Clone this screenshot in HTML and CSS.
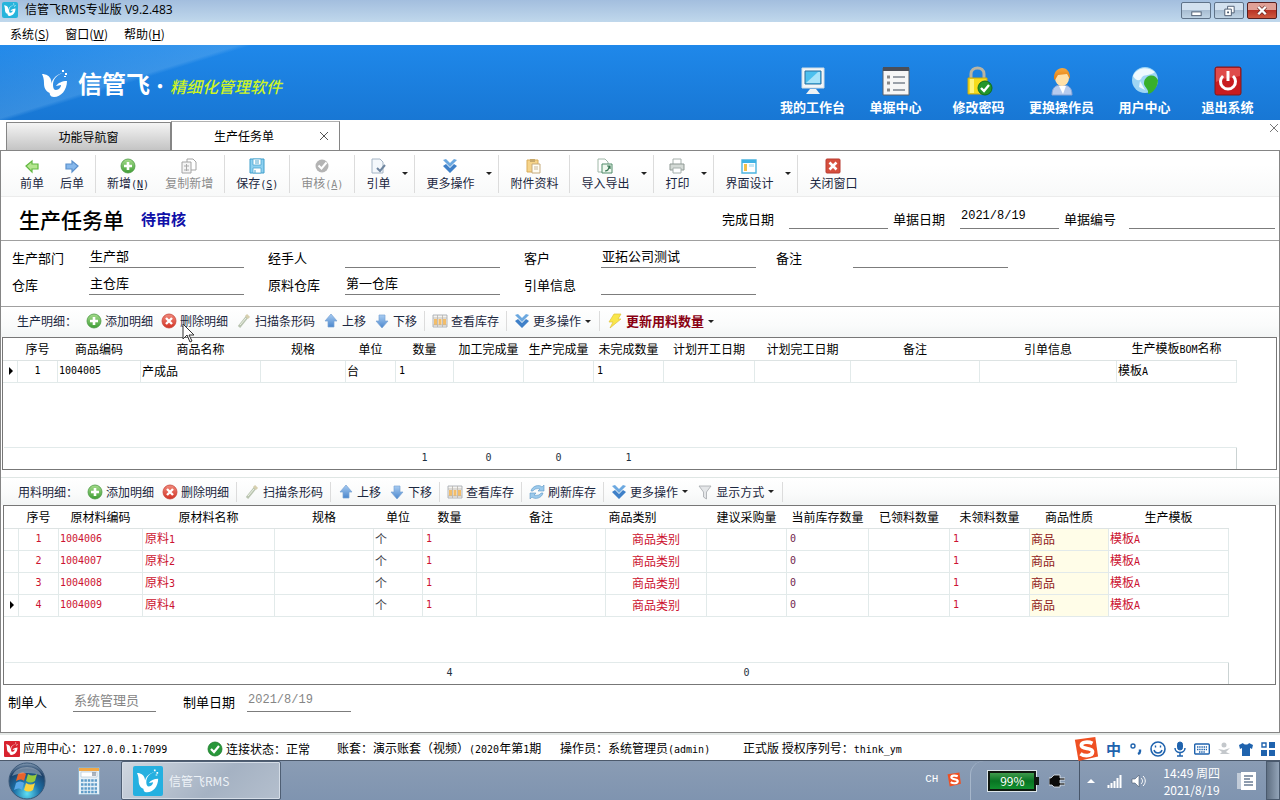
FILE: index.html
```html
<!DOCTYPE html>
<html lang="zh-CN">
<head>
<meta charset="utf-8">
<title>信管飞RMS专业版 V9.2.483</title>
<link rel="stylesheet" href="styles.css">
</head>
<body>
<svg class="sprite" aria-hidden="true">
  <defs>
    <linearGradient id="gGreen" x1="0" y1="0" x2="0" y2="1"><stop offset="0" stop-color="#a6dc8c"/><stop offset="1" stop-color="#3f9e35"/></linearGradient>
    <linearGradient id="gRed" x1="0" y1="0" x2="0" y2="1"><stop offset="0" stop-color="#f08a7c"/><stop offset="1" stop-color="#d33325"/></linearGradient>
    <linearGradient id="gBlue" x1="0" y1="0" x2="0" y2="1"><stop offset="0" stop-color="#a8ccf2"/><stop offset="1" stop-color="#4a86cc"/></linearGradient>
    <linearGradient id="gOrange" x1="0" y1="0" x2="0" y2="1"><stop offset="0" stop-color="#f7a83c"/><stop offset="1" stop-color="#e07a10"/></linearGradient>
    <radialGradient id="gOrb" cx=".5" cy=".85" r=".9"><stop offset="0" stop-color="#5fe0f4"/><stop offset=".4" stop-color="#1b6fa6"/><stop offset=".75" stop-color="#1d3f66"/><stop offset="1" stop-color="#a9bccf"/></radialGradient>
  </defs>
  <symbol id="bird" viewBox="0 0 26 28"><path d="M0 5c4 0 8 2 9 6l1 5-2 8C3 22 2 18 2 14 2 10 1 7 0 5z"/><path d="M22 4c-7 1-11 6-11 12 0 3 1 5 3 5 3 0 5-3 5-5l-5 1c2-3 6-5 11-5 0 9-6 16-13 16-4 0-5-3-4-7C9 11 13 5 22 4z"/><path d="M20 1h2v2h-2zM23 4h2v2h-2zM22 7h2v1h-2z"/></symbol>
  <symbol id="left" viewBox="0 0 16 16"><path d="M2 8l6-5v3h6v5H8v3z" fill="#b5e690" stroke="#62b840" stroke-width="1.200"/></symbol>
  <symbol id="right" viewBox="0 0 16 16"><path d="M14 8L8 3v3H2v5h6v3z" fill="#86b8ec" stroke="#5b90cc" stroke-width="1.200"/></symbol>
  <symbol id="up" viewBox="0 0 16 16"><path d="M8 1l6 7h-3v6H5V8H2z" fill="url(#gBlue)" stroke="#7aa4d4" stroke-width=".7"/></symbol>
  <symbol id="down" viewBox="0 0 16 16"><path d="M8 15l6-7h-3V2H5v6H2z" fill="url(#gBlue)" stroke="#7aa4d4" stroke-width=".7"/></symbol>
  <symbol id="plus" viewBox="0 0 16 16"><circle cx="8" cy="8" r="7" fill="url(#gGreen)" stroke="#4c9a45" stroke-width=".8"/><path d="M8 4v8M4 8h8" stroke="#fff" stroke-width="2.6"/></symbol>
  <symbol id="cross" viewBox="0 0 16 16"><circle cx="8" cy="8" r="7" fill="url(#gRed)" stroke="#c8453a" stroke-width=".8"/><path d="M5 5l6 6M11 5l-6 6" stroke="#fff" stroke-width="2.4"/></symbol>
  <symbol id="copy" viewBox="0 0 16 16"><path d="M6 1h6l3 3v8H6z" fill="#fff" stroke="#a4a4a4"/><path d="M1 4h9v11H1z" fill="#f4f4f4" stroke="#a4a4a4"/><path d="M3 8h5M3 12h5M5.500 6v7" stroke="#aaa"/></symbol>
  <symbol id="save" viewBox="0 0 16 16"><path d="M1 1h14v14H1z" fill="#8dd0f0" stroke="#3f9ecb"/><path d="M4 1h8v6H4zM4 10h8v5H4z" fill="#fff" stroke="#4fa6cf" stroke-width=".8"/><path d="M6 3h4M6 5h4M6 12v3" stroke="#4fa6cf"/></symbol>
  <symbol id="check" viewBox="0 0 16 16"><circle cx="8" cy="8" r="6.5" fill="#b4b4b4"/><path d="M4.500 7.500l3 3 5-6" fill="none" stroke="#fff" stroke-width="2"/></symbol>
  <symbol id="okay" viewBox="0 0 16 16"><circle cx="8" cy="8" r="7" fill="#28983a" stroke="#1a7a2a" stroke-width=".8"/><path d="M4 8l3 3 5-6" fill="none" stroke="#fff" stroke-width="2.2"/></symbol>
  <symbol id="pull" viewBox="0 0 16 16"><path d="M2 1h8l3 3v11H2z" fill="#f4f8fc" stroke="#a4b4c4"/><path d="M7 10l3 3 5-6" fill="none" stroke="#6f86a0" stroke-width="2"/></symbol>
  <symbol id="more" viewBox="0 0 16 16"><path d="M1 2l3-1 4 4 4-4 3 1-7 7z" fill="#6ba8e0"/><path d="M1 8l3-2 4 4 4-4 3 2-7 7z" fill="#3f80c8"/></symbol>
  <symbol id="paste" viewBox="0 0 16 16"><path d="M1 2h11v12H1z" fill="#f6d48a" stroke="#d9ac5a"/><path d="M4 1h5v3H4z" fill="#c8a96a"/><path d="M6 6h8v9H6z" fill="#fffdf4" stroke="#c6ab7c"/><path d="M8 9h4M8 11h4" stroke="#c9b89a"/></symbol>
  <symbol id="swap" viewBox="0 0 16 16"><path d="M1 1h7l3 3v10H1z" fill="#fff" stroke="#a0b8a8"/><path d="M5 6h10v9H5z" fill="#eef8ee" stroke="#4f8a68"/><path d="M8 13c3 0 4-2 4-5M10 8h3v3" fill="none" stroke="#377652" stroke-width="1.2"/></symbol>
  <symbol id="print" viewBox="0 0 16 16"><path d="M4 6V1h8v5" fill="#fff" stroke="#a6b0ac"/><path d="M1 6h14v6H1z" fill="#d4dad6" stroke="#8f9994"/><path d="M4 10h8v5H4z" fill="#fff" stroke="#a6b0ac"/></symbol>
  <symbol id="layout" viewBox="0 0 16 16"><path d="M1 2h14v13H1z" fill="#fff" stroke="#4bb4e0" stroke-width="1.4"/><path d="M1 2h14v3H1z" fill="#3fb2e4"/><path d="M3 6h3v7H3z" fill="#f4c04a"/><path d="M8 6h5v3H8z" fill="#c5e8f6"/></symbol>
  <symbol id="closebox" viewBox="0 0 16 16"><rect x="1" y="1" width="14" height="14" rx="1" fill="#d6503e" stroke="#b83a30"/><path d="M4.500 4.500l7 7M11.500 4.500l-7 7" stroke="#fff" stroke-width="2.6"/></symbol>
  <symbol id="scan" viewBox="0 0 16 16"><path d="M3 14l8-10" stroke="#b9c4b0" stroke-width="3"/><path d="M10 2l3 3" stroke="#d6cfae" stroke-width="3"/><path d="M4 12l6-7" stroke="#eef2e6" stroke-width="1"/></symbol>
  <symbol id="stock" viewBox="0 0 16 16"><path d="M1 2h14v12H1z" fill="#f5f3f0" stroke="#a0a4ac" stroke-width=".8"/><path d="M2 6h3v6H2zM6.500 6h3v6h-3zM11 6h3v6h-3z" fill="#f3bd69"/><path d="M1 5h14M1 12h14M5.500 2v12M10.500 2v12" stroke="#b6b2ac" stroke-width=".8"/></symbol>
  <symbol id="refresh" viewBox="0 0 16 16"><path d="M2 7c1-5 8-7 11-4l2-2v6H9l2-2C8 4 5 5 4 7zM14 9c-1 5-8 7-11 4l-2 2V9h6l-2 2c3 1 6 0 7-2z" fill="#9ccaec" stroke="#5e98c6" stroke-width=".6"/></symbol>
  <symbol id="funnel" viewBox="0 0 16 16"><path d="M2 2h12L9.500 8v7l-3-2V8z" fill="#e4e6e8" stroke="#a4a8ac" stroke-width=".8"/></symbol>
  <symbol id="bolt" viewBox="0 0 16 16"><path d="M7 1h7l-3 5h3L3 15l3-6H2z" fill="#f9e64a" stroke="#e0c23a" stroke-width=".7"/></symbol>
  <symbol id="sogou" viewBox="0 0 28 28"><path d="M2 4l22-3 3 21-21 5z" fill="#ef5023"/><path d="M21 8c-4-2-12-2-12 2 0 5 12 2 12 7 0 5-9 5-13 2" fill="none" stroke="#fff" stroke-width="4"/></symbol>
</svg>

<header class="titlebar">
  <svg class="app-icon" viewBox="0 0 16 16"><rect width="16" height="16" rx="2" fill="#27b4dc"/><use href="#bird" x="2" y="1" width="12" height="13" fill="#fff"/></svg>
  <span>信管飞RMS专业版 V9.2.483</span>
  <div class="win-buttons">
    <button aria-label="最小化"><svg viewBox="0 0 28 16"><rect x="9.500" y="9.500" width="10" height="4" fill="#fff" stroke="#4a5a70"/></svg></button>
    <button aria-label="还原"><svg viewBox="0 0 28 16"><path d="M12.500 3.500h7v7h-7z" fill="#fff" stroke="#4a5a70"/><path d="M9.500 6.500h7v7h-7z" fill="#fff" stroke="#4a5a70"/><path d="M12 9h2v2h-2z" fill="#4a5a70"/></svg></button>
    <button class="close" aria-label="关闭"><svg viewBox="0 0 28 16"><path d="M10 4l8 8M18 4l-8 8" stroke="#6b2a25" stroke-width="4"/><path d="M10 4l8 8M18 4l-8 8" stroke="#fff" stroke-width="2.600"/></svg></button>
  </div>
</header>

<nav class="menubar">
  <button>系统(<u>S</u>)</button>
  <button>窗口(<u>W</u>)</button>
  <button>帮助(<u>H</u>)</button>
</nav>

<section class="banner">
  <svg class="brand-icon" viewBox="0 0 26 28" fill="#fff"><use href="#bird"/></svg>
  <strong class="brand">信管飞</strong><span class="dot">·</span><em class="slogan">精细化管理软件</em>
  <div class="banner-actions">
    <button><svg viewBox="0 0 30 30"><path d="M4 2h22v20H4z" fill="#f2f6f8" stroke="#d0dce4"/><path d="M7 5h16v13H7z" fill="#4cc0ee" stroke="#2a6f9e"/><path d="M8 17L20 6h2v11z" fill="#a8e4fa"/><path d="M12 23h6l4 5H8z" fill="#eef2f4"/></svg>我的工作台</button>
    <button><svg viewBox="0 0 30 30"><path d="M2 2h26v27H2z" fill="#f6f6f6" stroke="#5c6068"/><path d="M2 1h26v4H2z" fill="#4a4e58"/><path d="M6 11h3M6 17h3M6 24h3" stroke="#888" stroke-width="3"/><path d="M12 11h12M12 17h12M12 24h12" stroke="#9aa0a8" stroke-width="2"/></svg>单据中心</button>
    <button><svg viewBox="0 0 30 30"><path d="M7 14V8c0-8 13-8 13 0v6" fill="none" stroke="#b8b4a4" stroke-width="3"/><path d="M4 12h19v16H4z" fill="#f7dc1c" stroke="#c8a812"/><path d="M6 13h4v14H6z" fill="#fff27a"/><circle cx="21" cy="22" r="7" fill="#22962a" stroke="#0f6c1c"/><path d="M17 22l3 3 5-6" fill="none" stroke="#fff" stroke-width="2.400"/></svg>修改密码</button>
    <button><svg viewBox="0 0 30 30"><path d="M5 29c0-8 4-10 10-10s10 2 10 10z" fill="#b6cbee" stroke="#86a4d6"/><path d="M12 20l4 8 3-8z" fill="#fff"/><ellipse cx="15" cy="12" rx="7" ry="8" fill="#ffe0a8"/><path d="M7 13C6-1 24-2 23 13l-3-5-9 1-3 5z" fill="url(#gOrange)"/></svg>更换操作员</button>
    <button><svg viewBox="0 0 30 30"><circle cx="15" cy="14" r="13" fill="#9fd6f4"/><path d="M3 10C7 1 18 0 25 6c-6 5-12 1-14 7-2 2-5 2-8-3z" fill="#eef9fe"/><path d="M17 11c5-3 9-1 11 3 0 7-5 13-10 14 1-5-3-6-4-10 0-4 1-5 3-7z" fill="#38b02c"/><path d="M10 15l5 9-6-3z" fill="#eef9fe"/></svg>用户中心</button>
    <button><svg viewBox="0 0 30 30"><rect x="2" y="1" width="26" height="28" rx="2" fill="#c81c20" stroke="#7e1a1c"/><path d="M3 2h24v8C18 12 10 12 3 16z" fill="#e8605c" opacity=".7"/><path d="M10 10a7.500 7.500 0 1 0 10 0" fill="none" stroke="#fff" stroke-width="3"/><path d="M15 5v10" stroke="#fff" stroke-width="3"/></svg>退出系统</button>
  </div>
</section>

<nav class="tabs">
  <button class="tab">功能导航窗</button>
  <button class="tab active">生产任务单<svg viewBox="0 0 8 8"><path d="M0 0l8 8M8 0L0 8" stroke="#555"/></svg></button>
  <button class="close-all" aria-label="关闭页签"><svg viewBox="0 0 8 8"><path d="M0 0l8 8M8 0L0 8" stroke="#777"/></svg></button>
</nav>

<main class="document">
  <div class="toolbar">
    <button><svg><use href="#left"/></svg>前单</button>
    <button><svg><use href="#right"/></svg>后单</button>
    <i class="sep"></i>
    <button><svg class="big"><use href="#plus"/></svg><span>新增<span class="num">(<u>N</u>)</span></span></button>
    <button disabled><svg><use href="#copy"/></svg>复制新增</button>
    <i class="sep"></i>
    <button><svg><use href="#save"/></svg><span>保存<span class="num">(<u>S</u>)</span></span></button>
    <i class="sep"></i>
    <button disabled><svg><use href="#check"/></svg><span>审核<span class="num">(<u>A</u>)</span></span></button>
    <i class="sep"></i>
    <button><svg><use href="#pull"/></svg>引单</button><button class="drop" aria-label="引单选项"></button>
    <i class="sep"></i>
    <button><svg><use href="#more"/></svg>更多操作</button><button class="drop" aria-label="更多操作选项"></button>
    <i class="sep"></i>
    <button><svg><use href="#paste"/></svg>附件资料</button>
    <i class="sep"></i>
    <button><svg><use href="#swap"/></svg>导入导出</button><button class="drop" aria-label="导入导出选项"></button>
    <i class="sep"></i>
    <button><svg><use href="#print"/></svg>打印</button><button class="drop" aria-label="打印选项"></button>
    <i class="sep"></i>
    <button><svg><use href="#layout"/></svg>界面设计</button><button class="drop" aria-label="界面设计选项"></button>
    <i class="sep"></i>
    <button><svg><use href="#closebox"/></svg>关闭窗口</button>
  </div>

  <div class="doc-head">
    <h1>生产任务单</h1><strong class="state">待审核</strong>
    <div class="head-fields">
      <label>完成日期<input type="text"></label>
      <label>单据日期<input type="text" value="2021/8/19"></label>
      <label>单据编号<input class="wide" type="text"></label>
    </div>
  </div>

  <div class="fields">
    <label>生产部门<input type="text" value="生产部"></label>
    <label>经手人<input type="text"></label>
    <label>客户<input type="text" value="亚拓公司测试"></label>
    <label>备注<input type="text"></label>
    <label>仓库<input type="text" value="主仓库"></label>
    <label>原料仓库<input type="text" value="第一仓库"></label>
    <label>引单信息<input type="text"></label>
  </div>

  <div class="detail-bar first">
    <span class="caption">生产明细：</span>
    <button><svg><use href="#plus"/></svg>添加明细</button>
    <button class="pointed"><svg><use href="#cross"/></svg>删除明细<svg class="cursor" viewBox="0 0 13 20"><path d="M1 1v15l4-4 3 7 2-1-3-6h5z" fill="#fff" stroke="#333"/></svg></button>
    <button><svg><use href="#scan"/></svg>扫描条形码</button>
    <button><svg><use href="#up"/></svg>上移</button>
    <button><svg><use href="#down"/></svg>下移</button>
    <i class="sep"></i>
    <button><svg><use href="#stock"/></svg>查看库存</button>
    <i class="sep"></i>
    <button><svg><use href="#more"/></svg>更多操作</button><button class="drop" aria-label="更多操作选项"></button>
    <i class="sep"></i>
    <button class="urgent"><svg><use href="#bolt"/></svg>更新用料数量</button><button class="drop" aria-label="更新用料选项"></button>
  </div>

  <div class="grid">
    <table>
      <colgroup><col style="width:14px"><col style="width:40px"><col style="width:83px"><col style="width:120px"><col style="width:85px"><col style="width:50px"><col style="width:58px"><col style="width:70px"><col style="width:70px"><col style="width:70px"><col style="width:91px"><col style="width:96px"><col style="width:129px"><col style="width:137px"><col style="width:120px"></colgroup>
      <thead><tr><th></th><th>序号</th><th>商品编码</th><th>商品名称</th><th>规格</th><th>单位</th><th>数量</th><th>加工完成量</th><th>生产完成量</th><th>未完成数量</th><th>计划开工日期</th><th>计划完工日期</th><th>备注</th><th>引单信息</th><th>生产模板<span class="num">BOM</span>名称</th></tr></thead>
      <tbody>
        <tr><td class="mark current"></td><td class="num mid">1</td><td class="num">1004005</td><td>产成品</td><td></td><td>台</td><td class="num qty">1</td><td></td><td></td><td class="num qty">1</td><td></td><td></td><td></td><td></td><td>模板<span class="num">A</span></td></tr>
        <tr class="blank tall"><td colspan="15"></td></tr>
      </tbody>
      <tfoot><tr><td colspan="6"></td><td class="num">1</td><td class="num">0</td><td class="num">0</td><td class="num">1</td><td colspan="5"></td></tr></tfoot>
    </table>
  </div>

  <div class="detail-bar second">
    <span class="caption">用料明细：</span>
    <button><svg><use href="#plus"/></svg>添加明细</button>
    <button><svg><use href="#cross"/></svg>删除明细</button>
    <i class="sep"></i>
    <button><svg><use href="#scan"/></svg>扫描条形码</button>
    <i class="sep"></i>
    <button><svg><use href="#up"/></svg>上移</button>
    <button><svg><use href="#down"/></svg>下移</button>
    <i class="sep"></i>
    <button><svg><use href="#stock"/></svg>查看库存</button>
    <i class="sep"></i>
    <button><svg><use href="#refresh"/></svg>刷新库存</button>
    <i class="sep"></i>
    <button><svg><use href="#more"/></svg>更多操作</button><button class="drop" aria-label="更多操作选项"></button>
    <button><svg><use href="#funnel"/></svg>显示方式</button><button class="drop" aria-label="显示方式选项"></button>
    <i class="sep"></i>
  </div>

  <div class="grid materials">
    <table>
      <colgroup><col style="width:14px"><col style="width:40px"><col style="width:84px"><col style="width:132px"><col style="width:99px"><col style="width:49px"><col style="width:54px"><col style="width:129px"><col style="width:101px"><col style="width:80px"><col style="width:82px"><col style="width:81px"><col style="width:80px"><col style="width:79px"><col style="width:120px"></colgroup>
      <thead><tr><th></th><th>序号</th><th>原材料编码</th><th>原材料名称</th><th>规格</th><th>单位</th><th>数量</th><th>备注</th><th class="start">商品类别</th><th>建议采购量</th><th>当前库存数量</th><th>已领料数量</th><th>未领料数量</th><th>商品性质</th><th>生产模板</th></tr></thead>
      <tbody>
        <tr><td class="mark"></td><td class="num mid">1</td><td class="num">1004006</td><td class="name">原料<span class="num">1</span></td><td></td><td class="unit">个</td><td class="num qty">1</td><td></td><td class="mid">商品类别</td><td></td><td class="num qty zero">0</td><td></td><td class="num qty">1</td><td class="kind">商品</td><td>模板<span class="num">A</span></td></tr>
        <tr><td class="mark"></td><td class="num mid">2</td><td class="num">1004007</td><td class="name">原料<span class="num">2</span></td><td></td><td class="unit">个</td><td class="num qty">1</td><td></td><td class="mid">商品类别</td><td></td><td class="num qty zero">0</td><td></td><td class="num qty">1</td><td class="kind">商品</td><td>模板<span class="num">A</span></td></tr>
        <tr><td class="mark"></td><td class="num mid">3</td><td class="num">1004008</td><td class="name">原料<span class="num">3</span></td><td></td><td class="unit">个</td><td class="num qty">1</td><td></td><td class="mid">商品类别</td><td></td><td class="num qty zero">0</td><td></td><td class="num qty">1</td><td class="kind">商品</td><td>模板<span class="num">A</span></td></tr>
        <tr><td class="mark current"></td><td class="num mid">4</td><td class="num">1004009</td><td class="name">原料<span class="num">4</span></td><td></td><td class="unit">个</td><td class="num qty">1</td><td></td><td class="mid">商品类别</td><td></td><td class="num qty zero">0</td><td></td><td class="num qty">1</td><td class="kind">商品</td><td>模板<span class="num">A</span></td></tr>
        <tr class="blank"><td colspan="15"></td></tr>
      </tbody>
      <tfoot><tr><td colspan="6"></td><td class="num">4</td><td colspan="2"></td><td class="num">0</td><td colspan="5"></td></tr></tfoot>
    </table>
  </div>

  <div class="doc-foot">
    <label>制单人<input type="text" value="系统管理员" readonly></label>
    <label>制单日期<input class="date" type="text" value="2021/8/19" readonly></label>
  </div>
</main>

<footer class="status">
  <div class="cell server"><svg viewBox="0 0 16 16"><rect width="16" height="16" rx="1" fill="#d8232e"/><use href="#bird" x="2" y="1" width="12" height="13" fill="#fff"/></svg><span>应用中心：<span class="num">127.0.0.1:7099</span></span></div>
  <div class="cell link"><svg><use href="#okay"/></svg><span>连接状态：正常</span></div>
  <div class="cell book"><span>账套：演示账套（视频）<span class="num">(2020</span>年第<span class="num">1</span>期</span></div>
  <div class="cell user"><span>操作员：系统管理员<span class="num">(admin)</span></span></div>
  <div class="cell"><span>正式版 授权序列号：<span class="num">think_ym</span></span></div>
  <div class="ime">
    <svg class="ime-logo"><use href="#sogou"/></svg>
    <b>中</b>
    <svg viewBox="0 0 16 16"><circle cx="5" cy="5" r="2" fill="none" stroke="#1f63ae" stroke-width="1.400"/><path d="M12 8.500v2c0 1-1 2-2 2.500" fill="none" stroke="#1f63ae" stroke-width="2.400"/></svg>
    <svg viewBox="0 0 16 16" fill="none" stroke="#1f63ae"><circle cx="8" cy="8" r="7" stroke-width="1.600"/><path d="M4 9c1 4 7 4 8 0M5.500 4.500v2M10.500 4.500v2" stroke-width="1.400"/></svg>
    <svg viewBox="0 0 16 16" fill="none" stroke="#1f63ae"><rect x="5.500" y="1" width="5" height="8" rx="2.500" fill="#1f63ae"/><path d="M3 7c0 6 10 6 10 0M8 11v4M5 15h6" stroke-width="1.500"/></svg>
    <svg viewBox="0 0 16 16"><rect x=".7" y="3" width="14.600" height="10" rx="1" fill="none" stroke="#1f63ae" stroke-width="1.400"/><path d="M3 6h10M3 8.500h10M5 11h6" stroke="#1f63ae" stroke-width="1.300" stroke-dasharray="1.400 .8"/></svg>
    <svg viewBox="0 0 16 16" fill="#c4c8cc"><circle cx="8" cy="4" r="2.500"/><path d="M2 8l6 1 6-2-4 4 4 2H4l2-2z"/></svg>
    <svg viewBox="0 0 16 16"><path d="M5 2c1 2 5 2 6 0l4 2-1 4-2-1v8H4V7L2 8 1 4z" fill="#1f63ae"/></svg>
    <svg viewBox="0 0 16 16" fill="#1f63ae"><path d="M1 9h6v6H1zM9 9h6v6H9zM9 1h6v6H9z"/><path d="M2 2h4v4H2z" fill="none" stroke="#1f63ae" stroke-width="1.400"/></svg>
  </div>
</footer>

<div class="taskbar">
  <button class="start-orb" aria-label="开始"><svg viewBox="0 0 38 38"><circle cx="19" cy="19" r="18" fill="url(#gOrb)" stroke="#3a5878"/><path d="M10 12c3-2 6-2 8 0l-2 7c-2-2-5-2-8 0z" fill="#e8642c"/><path d="M20 12c3 2 6 2 9 0l-2 7c-3 2-6 2-9 0z" fill="#96c83c"/><path d="M8 21c3-2 5-2 8 0l-2 7c-2-2-5-2-8 0z" fill="#58a8e8"/><path d="M18 21c3 2 6 2 9 0l-2 7c-3 2-6 2-9 0z" fill="#fbd33c"/><path d="M4 14C9 2 29 2 34 14 26 10 12 10 4 14z" fill="#fff" opacity=".35"/></svg></button>
  <button class="calc" aria-label="计算器"><svg viewBox="0 0 22 28"><rect x=".5" y=".5" width="21" height="27" rx="1" fill="#e8f2f8" stroke="#8fb0c8"/><path d="M1 1h20v3H1z" fill="#f0a848"/><path d="M3 5h16v5H3z" fill="#fff" stroke="#a8bccc" stroke-width=".6"/><path d="M14 6h4M14 8h4" stroke="#56687c"/><path d="M3 13.500h16M3 17.500h16M3 21.500h16M3 25h16" stroke="#5f9cc8" stroke-width="2.400" stroke-dasharray="2.500 .9"/></svg></button>
  <button class="task"><svg viewBox="0 0 30 30"><rect width="30" height="30" rx="2" fill="#25b0e0"/><use href="#bird" x="4" y="2" width="22" height="25" fill="#fff"/></svg><span>信管飞RMS</span></button>
  <div class="tray">
    <span class="lang">CH</span>
    <svg class="tray-sogou"><use href="#sogou"/></svg>
    <div class="power">
      <span class="battery">99%</span>
      <svg class="plug" viewBox="0 0 16 14"><path d="M5 1h6v3h5v2h-5v3h5v2h-5v2H5L3 11H0V4h2z" fill="#0b0b0b" stroke="#e6ecf2" stroke-width=".8"/></svg>
    </div>
    <div class="icons">
      <svg class="caret" viewBox="0 0 8 8"><path d="M0 6l4-4 4 4z" fill="#fff"/></svg>
      <svg viewBox="0 0 16 14"><path d="M1.500 14v-3M4.500 14v-5M7.500 14V7M10.500 14V4M13.500 14V1" stroke="#fff" stroke-width="2"/></svg>
      <svg viewBox="0 0 16 14"><path d="M1 5h3l4-4v12L4 9H1z" fill="#fff" stroke="#4a5a70" stroke-width=".6"/><path d="M10 4c2 2 2 4 0 6M12 2c3 3 3 7 0 10" fill="none" stroke="#fff"/></svg>
    </div>
    <div class="clock"><span>14:49 周四</span><span>2021/8/19</span></div>
    <svg class="note" viewBox="0 0 20 20"><path d="M1 2v16M3 2v16" stroke="#fff"/><path d="M4 1h15v18H4z" fill="#fff"/><path d="M7 5h9M7 8h6M7 11h9M7 14h9" stroke="#6a7c94" stroke-width="1.400"/></svg>
    <button class="desktop" aria-label="显示桌面"></button>
  </div>
</div>
</body>
</html>
```
FILE: styles.css
```css
* { box-sizing: border-box; }

body {
  margin: 0;
  min-height: 100vh;
  display: flex;
  flex-direction: column;
  font: 12px/16px "Noto Sans CJK SC", sans-serif;
  color: #000;
  background: #fff;
}

button {
  margin: 0;
  padding: 0;
  border: 0;
  background: none;
  color: inherit;
  font: inherit;
  white-space: nowrap;
}

svg { display: block; flex: none; }
.sprite { position: absolute; width: 0; height: 0; }
.num { font-family: "DejaVu Sans Mono", monospace; font-size: 10px; }

/* Window frame */
.titlebar {
  height: 22px;
  display: flex;
  align-items: center;
  gap: 7px;
  padding: 0 3px 2px 2px;
  background: linear-gradient(#a3bede, #c0d8ec);
}
.titlebar span { font-family: "Open Sans", "Noto Sans CJK SC", sans-serif; }
.app-icon { width: 16px; height: 16px; }
.win-buttons { margin-left: auto; display: flex; gap: 3px; }
.win-buttons button {
  width: 30px;
  height: 17px;
  border: 1px solid #5f7288;
  border-radius: 2px;
  background: linear-gradient(#d3e1ef 45%, #a8bdd2 50%, #bfd3e4);
}
.win-buttons svg { width: 28px; height: 15px; }
.win-buttons .close { border-color: #571f1f; background: linear-gradient(#e0a096 45%, #b93324 50%, #cf5a40); }

.menubar { height: 23px; display: flex; align-items: center; gap: 16px; padding-left: 10px; }
.menubar button { line-height: 20px; }

/* Banner */
.banner {
  height: 75px;
  display: flex;
  align-items: center;
  padding: 0 11px 0 41px;
  color: #fff;
  background:
    linear-gradient(163deg, rgba(110, 180, 240, .05), rgba(110, 180, 240, .35) 70px, transparent 74px) no-repeat,
    linear-gradient(#1f88ea, #1877d4);
}
.brand-icon { width: 28px; height: 28px; }
.brand { margin-left: 9px; font-size: 24px; line-height: 32px; font-weight: 700; }
.dot { width: 20px; font-size: 20px; text-align: center; padding-top: 6px; }
.slogan { font-size: 16px; line-height: 24px; font-weight: 500; color: #cdf425; padding-top: 6px; }
.banner-actions { margin-left: auto; display: flex; }
.banner-actions button {
  width: 83px;
  display: flex;
  flex-direction: column;
  align-items: center;
  gap: 3px;
  padding-top: 16px;
  font-size: 13px;
  font-weight: 700;
}
.banner-actions svg { width: 30px; height: 30px; }

/* Tabs */
.tabs { height: 30px; display: flex; align-items: flex-end; padding: 1px 2px 0 6px; }
.tab {
  width: 165px;
  height: 28px;
  border: 1px solid #858585;
  border-bottom: 0;
  background: linear-gradient(#f4f4f4, #c4c4c4);
}
.tab.active {
  width: 169px;
  height: 29px;
  display: flex;
  align-items: center;
  justify-content: flex-end;
  gap: 46px;
  padding-right: 11px;
  background: #fff;
  border-top-color: #b0b0b0;
}
.tab svg, .close-all svg { width: 8px; height: 8px; }
.close-all { margin-left: auto; align-self: flex-start; padding-top: 3px; }

/* Document */
.document {
  flex: 1;
  display: flex;
  flex-direction: column;
  border: 1px solid #858585;
}
.toolbar {
  height: 46px;
  display: flex;
  align-items: flex-start;
  padding: 7px 11px 0;
  color: #1b2740;
  border-bottom: 1px solid #ececec;
  background: linear-gradient(#fff 30%, #f8f9f9);
}
.toolbar button { display: flex; flex-direction: column; align-items: center; gap: 1px; padding: 0 8px; }
.toolbar button:disabled { color: #8c8c8c; }
.toolbar svg { width: 16px; height: 16px; }
.toolbar .sep { flex: none; width: 1px; height: 38px; margin: -3px 3px 0; background: #dcdcdc; }
.toolbar .drop { width: 13px; height: 32px; padding: 14px 0 0; }
.drop::before {
  content: "";
  width: 0;
  border: 3px solid transparent;
  border-top-color: #222;
  border-bottom: 0;
}

.doc-head {
  height: 44px;
  display: flex;
  align-items: center;
  padding: 0 4px 0 18px;
  border-bottom: 1px solid #a0a0a0;
}
h1 { margin: 0; font-size: 21px; line-height: 28px; font-weight: 500; }
.state { margin-left: 17px; font-size: 15px; line-height: 20px; color: #1010a8; }
.head-fields { margin-left: auto; display: flex; gap: 5px; }
label { display: flex; align-items: center; font-size: 13px; line-height: 20px; }
input {
  min-width: 0;
  height: 20px;
  padding: 0 1px 4px;
  border: 0;
  border-bottom: 1px solid #7c7c7c;
  border-radius: 0;
  background: none;
  color: #000;
  font: 13px/16px "Noto Sans CJK SC", sans-serif;
}
.head-fields input { width: 99px; margin-left: 15px; font-family: "Liberation Mono", "Noto Sans CJK SC", monospace; font-size: 12px; }
.head-fields .wide { width: 146px; margin-left: 13px; }

.fields {
  height: 66px;
  display: grid;
  grid-template-columns: 256px 256px 252px 256px;
  align-content: start;
  row-gap: 7px;
  padding: 7px 0 0 11px;
  border-bottom: 1px solid #a0a0a0;
}
.fields label { display: grid; grid-template-columns: 77px 155px; }

.detail-bar {
  display: flex;
  align-items: center;
  color: #1b2740;
  background: linear-gradient(#fff, #fafbfb 60%, #f3f5f5);
}
.detail-bar.first { height: 30px; padding: 0 0 2px 16px; }
.detail-bar.second { height: 28px; padding-left: 17px; border-top: 1px solid #dfe6e4; margin-top: 7px; }
.caption { width: 65px; }
.detail-bar button { display: flex; align-items: center; gap: 3px; padding: 0 4px; }
.detail-bar svg { width: 16px; height: 16px; }
.detail-bar .drop { width: 11px; padding: 0; }
.detail-bar .sep { width: 1px; height: 20px; margin: 0 3px; background: #dcdcdc; }
.detail-bar .urgent { color: #8a0012; font-size: 13px; font-weight: 700; }
.pointed { position: relative; }
.detail-bar .cursor { position: absolute; left: 25px; top: 10px; width: 13px; height: 20px; }

.grid { margin: 0 2px 0 1px; border: 1px solid #777; }
.materials { margin: 0 3px 0 2px; }
table { width: calc(100% - 39px); border-collapse: collapse; table-layout: fixed; }
.materials table { width: calc(100% - 47px); }
th, td { padding: 0; height: 22px; white-space: nowrap; text-align: left; font-weight: 400; line-height: 16px; }
th { text-align: center; border-bottom: 1px solid #dde3e3; }
th.start { text-align: left; padding-left: 3px; }
td { padding-left: 1px; border: 1px solid #e2eaea; }
.qty { padding-left: 3px; }
.name { padding-left: 2px; }
.mid { text-align: center; padding-left: 0; }
.mark { border-left-color: transparent; }
.current::before {
  content: "";
  display: block;
  width: 0;
  margin-left: 4px;
  border: 4px solid transparent;
  border-left-color: #000;
  border-right: 0;
}
.blank td { height: 46px; }
.blank.tall td { height: 65px; }
tbody .blank td { border-left: 0; border-right: 0; }
tfoot td { text-align: center; padding: 0; border: 0; color: #1e3040; }
tfoot td:last-child { border-right: 1px solid #cbd3d3; }
.materials tbody { color: #cc1230; }
.materials .unit { color: #45454d; }
.materials .zero { color: #70254c; }
.materials .kind { background: #fffde8; color: #902020; }

.doc-foot { flex: 1; min-height: 40px; display: flex; align-items: flex-start; gap: 27px; padding: 7px 7px 0; }
.doc-foot input { width: 83px; margin-left: 26px; color: #858585; }
.doc-foot .date { width: 104px; margin-left: 12px; font-family: "Liberation Mono", monospace; font-size: 12px; }

/* Status bar */
.status {
  height: 28px;
  display: flex;
  align-items: center;
  padding: 2px 4px 0;
  border-top: 2px solid #e4e8e6;
  border-bottom: 1px solid #4c596b;
}
.cell { display: flex; align-items: center; gap: 3px; white-space: nowrap; }
.cell svg { width: 16px; height: 16px; }
.server { width: 203px; }
.link { width: 130px; }
.book { width: 223px; }
.user { width: 183px; }
.ime { margin-left: auto; display: flex; align-items: center; gap: 6px; }
.ime svg { width: 16px; height: 16px; }
.ime .ime-logo { width: 28px; height: 26px; }
.ime b { width: 16px; font-size: 15px; color: #1f63ae; }

/* Taskbar */
.taskbar {
  height: 39px;
  display: flex;
  align-items: center;
  color: #fff;
  background: linear-gradient(#8a9cb4, #7f94b0);
}
.start-orb { margin-left: 8px; }
.start-orb svg { width: 38px; height: 38px; }
.calc { margin-left: 32px; }
.calc svg { width: 22px; height: 28px; }
.task {
  width: 160px;
  height: 39px;
  display: flex;
  align-items: center;
  gap: 6px;
  margin-left: 21px;
  padding-left: 11px;
  border: 1px solid #4f5f74;
  border-radius: 2px;
  box-shadow: inset 0 0 0 1px #d5dde7;
  background: linear-gradient(135deg, #d0d7e0, #a5b2c3 60%, #b4bfcd);
  color: #edf2f7;
}
.task svg { width: 30px; height: 30px; }
.tray { margin-left: auto; height: 39px; display: flex; align-items: center; }
.lang { font: 11px/16px "Liberation Mono", monospace; padding-bottom: 4px; }
.tray-sogou { width: 16px; height: 15px; margin: 0 8px 3px; }
.power {
  height: 39px;
  display: flex;
  align-items: center;
  gap: 13px;
  padding: 0 14px 0 17px;
  border-left: 1px solid #a6b6ca;
  border-right: 1px solid #48566a;
  border-top-left-radius: 14px;
}
.battery {
  position: relative;
  width: 48px;
  height: 20px;
  border: 2px solid #101810;
  outline: 1px solid #dde6ea;
  background: linear-gradient(#3f9a4c, #087422 50%, #129030);
  font-size: 12px;
  line-height: 16px;
  text-align: center;
}
.battery::after { content: ""; position: absolute; right: -5px; top: 4px; width: 4px; height: 8px; background: #101810; }
.plug { width: 16px; height: 14px; }
.icons { display: flex; align-items: center; gap: 8px; padding: 0 16px 0 7px; }
.icons svg { width: 16px; height: 14px; }
.icons .caret { width: 8px; height: 8px; }
.icons .caret + svg { margin-left: 4px; }
.clock { display: flex; flex-direction: column; align-items: center; line-height: 17px; margin-right: 3px; }
.note { width: 20px; height: 20px; margin: 0 9px 0 14px; }
.desktop { width: 14px; height: 39px; border: 1px solid #4a5a6e; background: linear-gradient(90deg, #5f6f82, #93a4b8); }
```
